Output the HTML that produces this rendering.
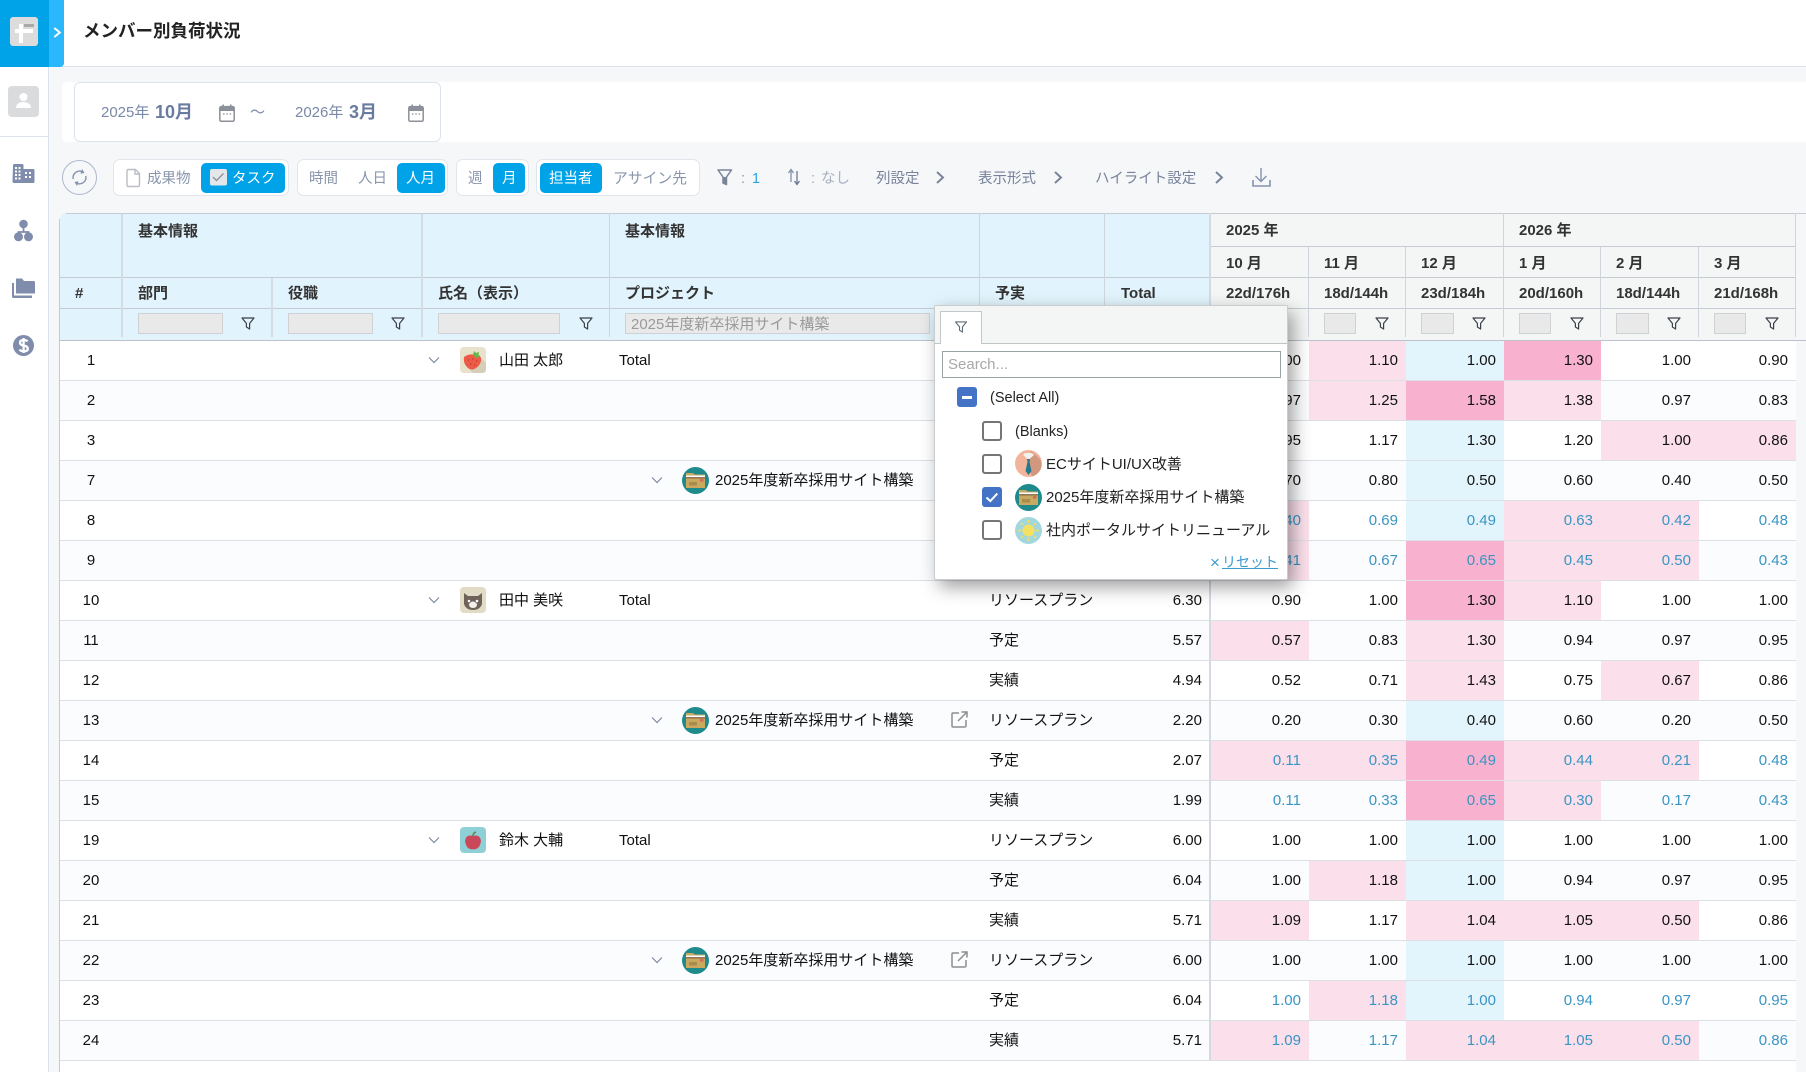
<!DOCTYPE html>
<html lang="ja"><head><meta charset="utf-8"><title>メンバー別負荷状況</title>
<style>
*{box-sizing:border-box}
html,body{margin:0;padding:0;width:1806px;height:1072px;overflow:hidden;background:#f6f7f9;font-family:"Liberation Sans","Noto Sans CJK JP",sans-serif;color:#111}
div,span,a,i,svg{position:absolute}
i{font-style:normal;white-space:nowrap}
.tx{white-space:nowrap;line-height:20px;height:20px}
.sv{top:0;left:0}
.seg{top:159px;height:37px;background:#fff;border:1px solid #e2e6ec;border-radius:7px}
.btn{top:163px;height:30px;background:#00a2e8;border-radius:5px}
.tb{top:169px;font-size:14.5px;color:#8a96ad}
.tw{color:#fff}
.ln{background:#c6cbd3}
.lv{background:#d0d5dc;width:1px}
.lw{background:#d6dce3;width:2px}
.hd{font-size:15px;font-weight:700;color:#333;white-space:nowrap;line-height:20px}
.inp{top:313px;height:21px;background:#e9e9e9;border:1px solid #cfd2d4}
.r{left:60px;width:1736px;height:40px;border-bottom:1px solid #dcdfe4;background:#fff;font-size:15px;line-height:39px}
.r.e{background:#fbfcfe}
.r i{top:0;height:39px}
.n{left:0;width:62px;text-align:center}
.nm{left:439px}.tl{left:559px}.pj{left:655px}.yj{left:929px}.t{left:1044px;width:105px;text-align:right;padding-right:7px}
.m{text-align:right;padding-right:8px}
.m1{left:1151px;width:98px}.m2{left:1249px;width:97px}.m3{left:1346px;width:98px}.m4{left:1444px;width:97px}.m5{left:1541px;width:98px}.m6{left:1639px;width:97px}
.p{background:#fbe0ec}.s{background:#f8b2cf}.b{background:#e2f4fc}
.bl .m{color:#3a94c4}
.ic{top:0}
.pop{left:934px;top:305px;width:354px;height:275px;background:#fff;border:1px solid #c9cdcf;border-radius:2px;box-shadow:5px 7px 18px rgba(0,0,0,.38)}
.cb{width:20px;height:20px;border:2.5px solid #767676;border-radius:3px;background:#fff}
.cb.on{background:#4472c4;border:1px solid #4472c4}
.pt{font-size:15px;color:#222;white-space:nowrap;line-height:20px}
</style></head><body>

<!-- shell -->
<div style="left:49px;top:0;width:1757px;height:67px;background:#fff;border-bottom:1px solid #dde3ec"></div>
<div style="left:0;top:67px;width:49px;height:1005px;background:#fff;border-right:1px solid #dde3ec"></div>
<div style="left:0;top:136px;width:48px;height:1px;background:#dde3ec"></div>
<div style="left:0;top:0;width:64px;height:67px;background:#2bb7fb;border-radius:0 0 4px 0"></div>
<div style="left:0;top:0;width:49px;height:67px;background:#00a2e8"></div>
<div style="left:10px;top:17px;width:28px;height:29px;background:#dcdcdc;border-radius:3px"></div>
<div style="left:24px;top:24px;width:10px;height:3px;background:#a9a9a9"></div>
<div style="left:18.5px;top:24px;width:4px;height:19px;background:#fff"></div>
<div style="left:14.5px;top:29px;width:18.5px;height:4px;background:#fff"></div>
<svg style="left:53px;top:27px" width="9" height="11" viewBox="0 0 9 11"><path d="M1.300 1 6.800 5.500 1.300 10" fill="none" stroke="#fff" stroke-width="2"/></svg>
<div class="tx" style="left:83px;top:21px;font-size:17.5px;font-weight:700;color:#222">メンバー別負荷状況</div>

<!-- date panel -->
<div style="left:62px;top:82px;width:1744px;height:60px;background:#fff;border-radius:6px 0 0 6px"></div>
<div style="left:74px;top:82px;width:367px;height:60px;background:#fff;border:1px solid #dde3ec;border-radius:6px"></div>
<div class="tx" style="left:101px;top:103px;font-size:15px;color:#7b89a8">2025年</div>
<div class="tx" style="left:155px;top:102px;font-size:18px;font-weight:700;color:#6a7ba0">10月</div>
<div class="tx" style="left:250px;top:103px;font-size:15px;color:#7b89a8">～</div>
<div class="tx" style="left:295px;top:103px;font-size:15px;color:#7b89a8">2026年</div>
<div class="tx" style="left:349px;top:102px;font-size:18px;font-weight:700;color:#6a7ba0">3月</div>

<!-- toolbar -->
<div class="seg" style="left:113px;width:176px"></div>
<div class="btn" style="left:201px;width:84px"></div>
<div class="tx tb" style="left:147px">成果物</div>
<div class="tx tb tw" style="left:232px">タスク</div>
<div class="seg" style="left:297px;width:151px"></div>
<div class="btn" style="left:397px;width:48px"></div>
<div class="tx tb" style="left:309px">時間</div>
<div class="tx tb" style="left:358px">人日</div>
<div class="tx tb tw" style="left:406px">人月</div>
<div class="seg" style="left:456px;width:73px"></div>
<div class="btn" style="left:493px;width:32px"></div>
<div class="tx tb" style="left:468px">週</div>
<div class="tx tb tw" style="left:502px">月</div>
<div class="seg" style="left:536px;width:164px"></div>
<div class="btn" style="left:540px;width:62px"></div>
<div class="tx tb tw" style="left:549px">担当者</div>
<div class="tx tb" style="left:613px;font-size:14.8px">アサイン先</div>
<div class="tx tb" style="left:741px">:</div>
<div class="tx tb" style="left:752px;color:#2aa3e0">1</div>
<div class="tx tb" style="left:811px;color:#a7afc0">:</div>
<div class="tx tb" style="left:821px;color:#a7afc0">なし</div>
<div class="tx tb" style="left:876px;color:#77829a">列設定</div>
<div class="tx tb" style="left:978px;color:#77829a">表示形式</div>
<div class="tx tb" style="left:1095px;color:#77829a">ハイライト設定</div>

<!-- table header -->
<div style="left:60px;top:213px;width:1149px;height:127px;background:#e1f3fc;border-radius:6px 0 0 0"></div>
<div style="left:1210px;top:213px;width:586px;height:127px;background:#f4f6f6"></div>
<div style="left:60px;top:340px;width:1736px;height:732px;background:#fff"></div>

<div class="ln" style="left:66px;top:213px;width:1740px;height:1px"></div>
<div class="ln" style="left:60px;top:277px;width:1736px;height:1px"></div>
<div class="ln" style="left:60px;top:308px;width:1736px;height:1px"></div>
<div class="ln" style="left:1210px;top:246px;width:586px;height:1px"></div>
<div class="lw" style="left:121px;top:214px;height:123px"></div>
<div class="lw" style="left:271px;top:278px;height:59px"></div>
<div class="lw" style="left:421px;top:214px;height:123px"></div>
<div class="lv" style="left:609px;top:213px;height:124px"></div>
<div class="lv" style="left:979px;top:213px;height:124px"></div>
<div class="lv" style="left:1104px;top:213px;height:124px"></div>
<div class="lv" style="left:1308px;top:247px;height:90px"></div>
<div class="lv" style="left:1405px;top:247px;height:90px"></div>
<div class="lv" style="left:1503px;top:213px;height:124px"></div>
<div class="lv" style="left:1600px;top:247px;height:90px"></div>
<div class="lv" style="left:1698px;top:247px;height:90px"></div>
<div class="lv" style="left:1795px;top:213px;height:124px"></div>

<div class="hd" style="left:138px;top:222px">基本情報</div>
<div class="hd" style="left:625px;top:222px">基本情報</div>
<div class="hd" style="left:75px;top:284px">#</div>
<div class="hd" style="left:138px;top:284px">部門</div>
<div class="hd" style="left:288px;top:284px">役職</div>
<div class="hd" style="left:438px;top:284px">氏名（表示）</div>
<div class="hd" style="left:625px;top:284px">プロジェクト</div>
<div class="hd" style="left:995px;top:284px">予実</div>
<div class="hd" style="left:1121px;top:284px">Total</div>
<div class="hd" style="left:1226px;top:221px">2025 年</div>
<div class="hd" style="left:1519px;top:221px">2026 年</div>
<div class="hd" style="left:1226px;top:254px">10 月</div>
<div class="hd" style="left:1324px;top:254px">11 月</div>
<div class="hd" style="left:1421px;top:254px">12 月</div>
<div class="hd" style="left:1519px;top:254px">1 月</div>
<div class="hd" style="left:1616px;top:254px">2 月</div>
<div class="hd" style="left:1714px;top:254px">3 月</div>
<div class="hd" style="left:1226px;top:284px">22d/176h</div>
<div class="hd" style="left:1324px;top:284px">18d/144h</div>
<div class="hd" style="left:1421px;top:284px">23d/184h</div>
<div class="hd" style="left:1519px;top:284px">20d/160h</div>
<div class="hd" style="left:1616px;top:284px">18d/144h</div>
<div class="hd" style="left:1714px;top:284px">21d/168h</div>

<div class="inp" style="left:138px;width:85px"></div>
<div class="inp" style="left:288px;width:85px"></div>
<div class="inp" style="left:438px;width:122px"></div>
<div class="inp" style="left:625px;width:305px;font-size:15px;line-height:22px;color:#9a9a9a;padding-left:5px;white-space:nowrap">2025年度新卒採用サイト構築</div>
<div class="inp" style="left:1226px;width:32px"></div>
<div class="inp" style="left:1324px;width:32px"></div>
<div class="inp" style="left:1421px;width:33px"></div>
<div class="inp" style="left:1519px;width:32px"></div>
<div class="inp" style="left:1616px;width:33px"></div>
<div class="inp" style="left:1714px;width:32px"></div>

<!-- rows -->
<div class="r" style="top:341px"><i class="n">1</i><i class="nm">山田 太郎</i><i class="tl">Total</i><i class="yj">リソースプラン</i><i class="t">6.20</i><i class="m m1">1.00</i><i class="m m2 p">1.10</i><i class="m m3 b">1.00</i><i class="m m4 s">1.30</i><i class="m m5">1.00</i><i class="m m6">0.90</i></div>
<div class="r e" style="top:381px"><i class="n">2</i><i class="yj">予定</i><i class="t">5.97</i><i class="m m1">0.97</i><i class="m m2 p">1.25</i><i class="m m3 s">1.58</i><i class="m m4 p">1.38</i><i class="m m5">0.97</i><i class="m m6">0.83</i></div>
<div class="r" style="top:421px"><i class="n">3</i><i class="yj">実績</i><i class="t">5.95</i><i class="m m1">0.95</i><i class="m m2">1.17</i><i class="m m3 b">1.30</i><i class="m m4">1.20</i><i class="m m5 p">1.00</i><i class="m m6 p">0.86</i></div>
<div class="r e" style="top:461px"><i class="n">7</i><i class="pj">2025年度新卒採用サイト構築</i><i class="yj">リソースプラン</i><i class="t">3.50</i><i class="m m1">0.70</i><i class="m m2">0.80</i><i class="m m3 b">0.50</i><i class="m m4">0.60</i><i class="m m5">0.40</i><i class="m m6">0.50</i></div>
<div class="r bl" style="top:501px"><i class="n">8</i><i class="yj">予定</i><i class="t">3.00</i><i class="m m1 p">0.40</i><i class="m m2">0.69</i><i class="m m3 b">0.49</i><i class="m m4 p">0.63</i><i class="m m5 p">0.42</i><i class="m m6">0.48</i></div>
<div class="r e bl" style="top:541px"><i class="n">9</i><i class="yj">実績</i><i class="t">3.00</i><i class="m m1 p">0.41</i><i class="m m2">0.67</i><i class="m m3 s">0.65</i><i class="m m4 p">0.45</i><i class="m m5 p">0.50</i><i class="m m6">0.43</i></div>
<div class="r" style="top:581px"><i class="n">10</i><i class="nm">田中 美咲</i><i class="tl">Total</i><i class="yj">リソースプラン</i><i class="t">6.30</i><i class="m m1">0.90</i><i class="m m2">1.00</i><i class="m m3 s">1.30</i><i class="m m4 p">1.10</i><i class="m m5">1.00</i><i class="m m6">1.00</i></div>
<div class="r e" style="top:621px"><i class="n">11</i><i class="yj">予定</i><i class="t">5.57</i><i class="m m1 p">0.57</i><i class="m m2">0.83</i><i class="m m3 p">1.30</i><i class="m m4">0.94</i><i class="m m5">0.97</i><i class="m m6">0.95</i></div>
<div class="r" style="top:661px"><i class="n">12</i><i class="yj">実績</i><i class="t">4.94</i><i class="m m1">0.52</i><i class="m m2">0.71</i><i class="m m3 p">1.43</i><i class="m m4">0.75</i><i class="m m5 p">0.67</i><i class="m m6">0.86</i></div>
<div class="r e" style="top:701px"><i class="n">13</i><i class="pj">2025年度新卒採用サイト構築</i><i class="yj">リソースプラン</i><i class="t">2.20</i><i class="m m1">0.20</i><i class="m m2">0.30</i><i class="m m3 b">0.40</i><i class="m m4">0.60</i><i class="m m5">0.20</i><i class="m m6">0.50</i></div>
<div class="r bl" style="top:741px"><i class="n">14</i><i class="yj">予定</i><i class="t">2.07</i><i class="m m1 p">0.11</i><i class="m m2 p">0.35</i><i class="m m3 s">0.49</i><i class="m m4 p">0.44</i><i class="m m5 p">0.21</i><i class="m m6">0.48</i></div>
<div class="r e bl" style="top:781px"><i class="n">15</i><i class="yj">実績</i><i class="t">1.99</i><i class="m m1">0.11</i><i class="m m2">0.33</i><i class="m m3 s">0.65</i><i class="m m4 p">0.30</i><i class="m m5">0.17</i><i class="m m6">0.43</i></div>
<div class="r" style="top:821px"><i class="n">19</i><i class="nm">鈴木 大輔</i><i class="tl">Total</i><i class="yj">リソースプラン</i><i class="t">6.00</i><i class="m m1">1.00</i><i class="m m2">1.00</i><i class="m m3 b">1.00</i><i class="m m4">1.00</i><i class="m m5">1.00</i><i class="m m6">1.00</i></div>
<div class="r e" style="top:861px"><i class="n">20</i><i class="yj">予定</i><i class="t">6.04</i><i class="m m1">1.00</i><i class="m m2 p">1.18</i><i class="m m3 b">1.00</i><i class="m m4">0.94</i><i class="m m5">0.97</i><i class="m m6">0.95</i></div>
<div class="r" style="top:901px"><i class="n">21</i><i class="yj">実績</i><i class="t">5.71</i><i class="m m1 p">1.09</i><i class="m m2">1.17</i><i class="m m3 p">1.04</i><i class="m m4 p">1.05</i><i class="m m5 p">0.50</i><i class="m m6">0.86</i></div>
<div class="r e" style="top:941px"><i class="n">22</i><i class="pj">2025年度新卒採用サイト構築</i><i class="yj">リソースプラン</i><i class="t">6.00</i><i class="m m1">1.00</i><i class="m m2">1.00</i><i class="m m3 b">1.00</i><i class="m m4">1.00</i><i class="m m5">1.00</i><i class="m m6">1.00</i></div>
<div class="r bl" style="top:981px"><i class="n">23</i><i class="yj">予定</i><i class="t">6.04</i><i class="m m1">1.00</i><i class="m m2 p">1.18</i><i class="m m3 b">1.00</i><i class="m m4">0.94</i><i class="m m5">0.97</i><i class="m m6">0.95</i></div>
<div class="r e bl" style="top:1021px"><i class="n">24</i><i class="yj">実績</i><i class="t">5.71</i><i class="m m1 p">1.09</i><i class="m m2">1.17</i><i class="m m3 p">1.04</i><i class="m m4 p">1.05</i><i class="m m5 p">0.50</i><i class="m m6">0.86</i></div>

<div style="left:59px;top:219px;width:1px;height:853px;background:#c6cbd3"></div>
<div style="left:1209px;top:213px;width:2px;height:848px;background:#d5d9e2"></div>
<div class="ln" style="left:60px;top:340px;width:1746px;height:1px;background:#bcc2cb"></div>

<!-- icons layer -->
<svg class="sv" width="1806" height="1072" viewBox="0 0 1806 1072" style="pointer-events:none">
<defs>
<symbol id="fl" viewBox="0 0 14 13"><path d="M1 1h12L8.600 6.400V12L5.400 10V6.400z" fill="none" stroke="#3c4048" stroke-width="1.200" stroke-linejoin="round"/></symbol>
<symbol id="chv" viewBox="0 0 12 8"><path d="M1 1.500 6 6.500 11 1.500" fill="none" stroke="#7f8aa0" stroke-width="1.200"/></symbol>
<symbol id="cal" viewBox="0 0 16 18"><rect x=".8" y="2.600" width="14.400" height="14.600" rx="1.400" fill="#fff" stroke="#8c9098" stroke-width="1.500"/><rect x=".8" y="2.600" width="14.400" height="4.400" fill="#8c9098"/><rect x="3.400" y=".5" width="1.600" height="3" fill="#8c9098"/><rect x="11" y=".5" width="1.600" height="3" fill="#8c9098"/><path d="M4 10h1.500M7.300 10h1.500M10.600 10h1.500" stroke="#8c9098" stroke-width="1.300"/></symbol>
<symbol id="ext" viewBox="0 0 17 17"><path d="M8 2H2.200A1.200 1.200 0 0 0 1 3.200v11.600A1.200 1.200 0 0 0 2.200 16h11.600a1.200 1.200 0 0 0 1.200-1.200V9" fill="none" stroke="#8d8d8d" stroke-width="1.500"/><path d="M7 10 15.500 1.500M10.500 1h5.500v5.500" fill="none" stroke="#8d8d8d" stroke-width="1.500"/></symbol>
<symbol id="fol" viewBox="0 0 27 27"><circle cx="13.500" cy="13.500" r="13.500" fill="#1f8a8c"/><path d="M4 6h7l1.500 1.500H23V21H4z" fill="#c9a860"/><rect x="4" y="8.500" width="19" height="1.800" fill="#fff"/><rect x="4" y="10.300" width="19" height="1" fill="#6b4a2e"/><rect x="18" y="12" width="3.500" height="2.500" fill="#d8645a"/><rect x="7" y="15" width="8" height="3.500" fill="#a98b4d"/></symbol>
</defs>

<!-- sidebar -->
<rect x="8" y="86" width="31" height="31" rx="4" fill="#dadbdd"/>
<circle cx="23.500" cy="97" r="4" fill="#fff"/><path d="M16 108c0-4 3.500-6 7.500-6s7.500 2 7.500 6z" fill="#fff"/>
<g fill="#7f8cab">
<path d="M13 165.500q0-1.500 1.500-1.500h7.500q1.500 0 1.500 1.500v3.500h9.500q1.500 0 1.500 1.500v11q0 1.500-1.500 1.500h-19q-1.500 0-1.500-1.500z"/>
<circle cx="23.500" cy="224" r="4.300"/><circle cx="18.500" cy="236.800" r="4.500"/><circle cx="28.500" cy="236.800" r="4.500"/>
<path d="M16 278.500h6l2 2.500h9.500q1.500 0 1.500 1.500v11H16z"/>
<path d="M12 283h2v12.500h18v2.500H13.500q-1.500 0-1.500-1.500z"/>
<circle cx="23.500" cy="345.500" r="10.500"/>
</g>
<g fill="#fff"><path d="M15 167h2v2h-2zM18.500 167h2v2h-2zM15 170.500h2v2h-2zM18.500 170.500h2v2h-2zM15 174h2v2h-2zM18.500 174h2v2h-2zM15 177.500h2v2h-2zM18.500 177.500h2v2h-2zM25 172h2v2h-2zM29 172h2v2h-2zM25 176h2v2h-2zM29 176h2v2h-2z"/></g>
<path d="M23.500 228v4M18.500 234v-2h10v2" fill="none" stroke="#7f8cab" stroke-width="1.800"/>
<path d="M27.500 341.500q-1-1.500-3.800-1.500-3.700 0-3.700 2.700 0 2.300 3.800 2.900 4 .6 4 3 0 2.700-4 2.700-3 0-4.200-1.800M23.600 338v15" fill="none" stroke="#fff" stroke-width="2.300"/>

<!-- calendars -->
<use href="#cal" x="219" y="104" width="16" height="18"/>
<use href="#cal" x="408" y="104" width="16" height="18"/>

<!-- refresh -->
<circle cx="79.500" cy="177.500" r="17" fill="none" stroke="#aeb8cd" stroke-width="1"/>
<path d="M73.200 179a6.500 6.500 0 0 1 9.600-7M85.800 176a6.500 6.500 0 0 1-9.600 7" fill="none" stroke="#8592ad" stroke-width="1.400"/>
<path d="M82 169l2.500 4-4 .8zM77 186l-2.500-4 4-.8z" fill="#8592ad"/>

<!-- doc + task check -->
<path d="M127 171q0-1.500 1.500-1.500h7l4 4v11.500q0 1.500-1.500 1.500h-9.500q-1.500 0-1.500-1.500zM135 169.500v4.500h4.500" fill="#fff" stroke="#b9bdc5" stroke-width="1.400"/>
<rect x="210" y="169" width="17" height="16.500" rx="2" fill="#e4e7ea"/>
<path d="M213 177l3.500 3.500 7-7" fill="none" stroke="#7a8494" stroke-width="1.200"/>

<!-- toolbar funnel, sort, chevrons, download -->
<path d="M718 170h13.500l-5 7v7.500l-3.500-1.500v-6z" fill="none" stroke="#7a8499" stroke-width="1.500" stroke-linejoin="round"/>
<path d="M723 177h3.500v7.500l-3.500-1.500z" fill="#7a8499"/>
<path d="M791 182v-12M788.500 173l2.500-3.500 2.500 3.500" fill="none" stroke="#8592ad" stroke-width="1.300"/>
<path d="M797 171v13M794.500 181l2.500 3.500 2.500-3.500" fill="none" stroke="#6d7a96" stroke-width="1.300"/>
<g fill="none" stroke="#77829a" stroke-width="1.900">
<path d="M937 172l6 5.500-6 5.500"/><path d="M1055 172l6 5.500-6 5.500"/><path d="M1216 172l6 5.500-6 5.500"/>
</g>
<path d="M1261 168v13M1255.500 176l5.500 5.500 5.500-5.500" fill="none" stroke="#8592ad" stroke-width="1.400"/>
<path d="M1253 180v6h17v-6" fill="none" stroke="#8592ad" stroke-width="1.600"/>

<!-- header filter icons -->
<use href="#fl" x="241" y="317" width="14" height="13"/>
<use href="#fl" x="391" y="317" width="14" height="13"/>
<use href="#fl" x="579" y="317" width="14" height="13"/>
<use href="#fl" x="1375" y="317" width="14" height="13"/>
<use href="#fl" x="1472" y="317" width="14" height="13"/>
<use href="#fl" x="1570" y="317" width="14" height="13"/>
<use href="#fl" x="1667" y="317" width="14" height="13"/>
<use href="#fl" x="1765" y="317" width="14" height="13"/>

<!-- row chevrons -->
<use href="#chv" x="428" y="356" width="12" height="8"/>
<use href="#chv" x="428" y="596" width="12" height="8"/>
<use href="#chv" x="428" y="836" width="12" height="8"/>
<use href="#chv" x="651" y="476" width="12" height="8"/>
<use href="#chv" x="651" y="716" width="12" height="8"/>
<use href="#chv" x="651" y="956" width="12" height="8"/>

<!-- member avatars -->
<rect x="460" y="347" width="26" height="26" rx="4" fill="#e8e2cd"/>
<path d="M475 352l11 11v6q0 4-4 4h-9l-6-6z" fill="#d6cfb8"/>
<path d="M464 357q4-3 9-2.500 6 .5 8 3 .8 5-3 9-3.500 3-6 3-3 0-5.500-3-3.500-4-2.500-9.500z" fill="#ed5a48"/>
<path d="M473 355l1-4 2 2 3-1-.5 3 2 1-4 2z" fill="#67b54d"/>
<path d="M468 360h1.200M472 359h1.200M476 361h1.200M470 364h1.200M474 365h1.200" stroke="#a53226" stroke-width="1"/>
<rect x="460" y="587" width="26" height="26" rx="4" fill="#e2dcc6"/>
<path d="M464 593l4 3h10l4-3v11q-2 6-9 6t-9-6z" fill="#6e6259"/><path d="M469 604q4-5 8 0 0 4-4 4t-4-4z" fill="#f3efe9"/><circle cx="469" cy="601" r="1.300" fill="#fff"/><circle cx="477" cy="601" r="1.300" fill="#fff"/>
<rect x="460" y="827" width="26" height="26" rx="4" fill="#8fd0d6"/>
<path d="M473 836q-7-2-8 5 1 7 5 8 3 .8 3 0 0 .8 3 0 4-1 5-8-1-7-8-5z" fill="#c9485a"/><path d="M473 836q0-3 3-4" fill="none" stroke="#5c8a3e" stroke-width="1.500"/>

<!-- project icons -->
<use href="#fol" x="682" y="467" width="27" height="27"/>
<use href="#fol" x="682" y="707" width="27" height="27"/>
<use href="#fol" x="682" y="947" width="27" height="27"/>
<use href="#ext" x="951" y="711" width="17" height="17"/>
<use href="#ext" x="951" y="951" width="17" height="17"/>
</svg>

<!-- popup -->
<div class="pop">
 <div style="left:0;top:0;width:352px;height:38px;background:#f4f6f6;border-bottom:1px solid #bfc4c6"></div>
 <div style="left:5px;top:5px;width:42px;height:33px;background:#fff;border:1px solid #c3c7c9;border-bottom:0"></div>
 <svg style="left:19px;top:15px" width="14" height="12" viewBox="0 0 14 13"><path d="M1 1h12L8.600 6.400V12L5.400 10V6.400z" fill="none" stroke="#5f6b78" stroke-width="1.200" stroke-linejoin="round"/></svg>
 <div style="left:7px;top:45px;width:339px;height:27px;border:1px solid #97a3a5;background:#fff;font-size:15px;line-height:25px;color:#a8a8a8;padding-left:5px">Search...</div>
 <div class="cb on" style="left:22px;top:81px"></div><div style="left:27px;top:90px;width:10px;height:2.500px;background:#fff"></div>
 <div class="pt" style="left:55px;top:82px;font-size:14.500px">(Select All)</div>
 <div class="cb" style="left:47px;top:115px"></div>
 <div class="pt" style="left:80px;top:116px;font-size:14.500px">(Blanks)</div>
 <div class="cb" style="left:47px;top:148px"></div>
 <svg style="left:80px;top:144px" width="27" height="27" viewBox="0 0 27 27"><circle cx="13.500" cy="13.500" r="13.500" fill="#f2b49a"/><path d="M16 1l9 8q4 9-3 15-2 1.500-5 2.500L13 16z" fill="#d1977f"/><path d="M8 5l5.500 5L19 5l-2-2h-7z" fill="#f3f1ec"/><path d="M12 9h3l-.5 3 2 9-3 4-3-4 2-9z" fill="#25798a"/></svg>
 <div class="pt" style="left:111px;top:149px;font-size:15px">ECサイトUI/UX改善</div>
 <div class="cb on" style="left:47px;top:181px"></div>
 <svg style="left:47px;top:181px" width="20" height="20" viewBox="0 0 20 20"><path d="M4.500 10.500l3.800 3.600 7-7.500" fill="none" stroke="#fff" stroke-width="2"/></svg>
 <svg style="left:80px;top:178px" width="27" height="27" viewBox="0 0 27 27"><circle cx="13.500" cy="13.500" r="13.500" fill="#1f8a8c"/><path d="M4 6h7l1.500 1.500H23V21H4z" fill="#c9a860"/><rect x="4" y="8.500" width="19" height="1.800" fill="#fff"/><rect x="4" y="10.300" width="19" height="1" fill="#6b4a2e"/><rect x="18" y="12" width="3.500" height="2.500" fill="#d8645a"/><rect x="7" y="15" width="8" height="3.500" fill="#a98b4d"/></svg>
 <div class="pt" style="left:111px;top:182px;font-size:15px">2025年度新卒採用サイト構築</div>
 <div class="cb" style="left:47px;top:214px"></div>
 <svg style="left:80px;top:211px" width="27" height="27" viewBox="0 0 27 27"><circle cx="13.500" cy="13.500" r="13.500" fill="#a2d8dd"/><circle cx="13.500" cy="13.500" r="6" fill="#f4e063"/><path d="M13.500 3v3M13.500 21v3M3 13.500h3M21 13.500h3M6 6l2 2M19 19l2 2M21 6l-2 2M8 19l-2 2" stroke="#f4e063" stroke-width="1.500"/></svg>
 <div class="pt" style="left:111px;top:215px;font-size:15px">社内ポータルサイトリニューアル</div>
 <div class="pt" style="left:275px;top:247px;color:#3b9bd0;font-size:17px">×</div>
 <div class="pt" style="left:287px;top:246px;color:#3b9bd0;font-size:14px;text-decoration:underline">リセット</div>
</div>
</body></html>
